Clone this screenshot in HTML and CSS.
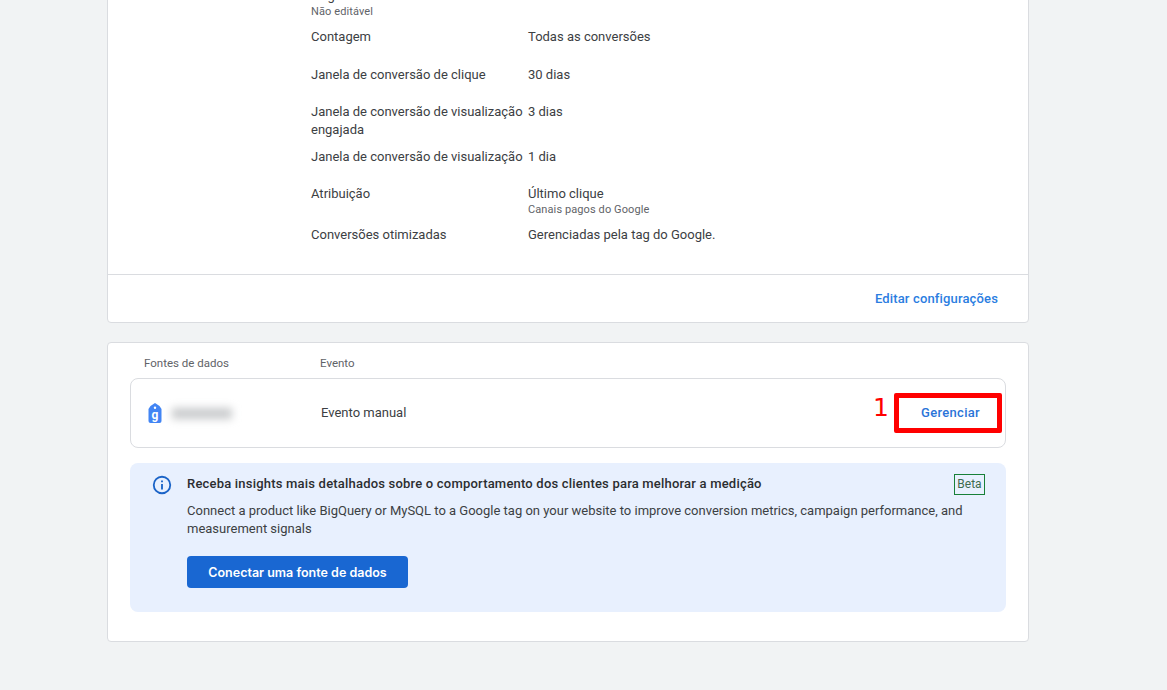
FILE: index.html
```html
<!DOCTYPE html>
<html lang="pt-BR">
<head>
    <meta charset="UTF-8">
    <meta name="viewport" content="width=device-width, initial-scale=1.0">
    <title>Detalhes da conversão</title>
    <link rel="stylesheet" href="styles.css">
</head>
<body>
    <main class="page">
        <section class="card settings">
            <div class="settings-list">
                <div class="setting first">
                    <div class="setting-label">Origem<small>Não editável</small></div>
                    <div></div>
                </div>
                <div class="setting">
                    <div class="setting-label">Contagem</div>
                    <div>Todas as conversões</div>
                </div>
                <div class="setting">
                    <div class="setting-label">Janela de conversão de clique</div>
                    <div>30 dias</div>
                </div>
                <div class="setting">
                    <div class="setting-label">Janela de conversão de visualização engajada</div>
                    <div>3 dias</div>
                </div>
                <div class="setting">
                    <div class="setting-label">Janela de conversão de visualização</div>
                    <div>1 dia</div>
                </div>
                <div class="setting">
                    <div class="setting-label">Atribuição</div>
                    <div>Último clique<small>Canais pagos do Google</small></div>
                </div>
                <div class="setting">
                    <div class="setting-label">Conversões otimizadas</div>
                    <div>Gerenciadas pela tag do Google.</div>
                </div>
            </div>
            <div class="settings-footer">
                <a class="link" href="#">Editar configurações</a>
            </div>
        </section>

        <section class="card sources">
            <div class="sources-head">
                <span class="col-source">Fontes de dados</span>
                <span>Evento</span>
            </div>
            <div class="source-row">
                <div class="source-name">
                    <svg class="tag-icon" viewBox="0 0 14 20" width="14" height="20">
                        <path fill="#4285f4" d="M7 0 11.500 3 13.500 6V18a2 2 0 0 1-2 2H2.500a2 2 0 0 1-2-2V6L2.500 3Z"/>
                        <circle cx="7" cy="4.800" r="1.200" fill="#fff"/>
                        <text x="7" y="15.500" class="tag-letter" text-anchor="middle">g</text>
                    </svg>
                    <span class="blurred"></span>
                </div>
                <div class="source-event">Evento manual</div>
                <a class="manage" href="#">Gerenciar</a>
                <span class="mark-number">1</span>
                <span class="mark-box"></span>
            </div>

            <div class="banner">
                <svg class="info-icon" viewBox="0 0 24 24" width="22" height="22">
                    <path fill="#1a63c7" d="M11 7h2v2h-2zm0 4h2v6h-2zm1-9a10 10 0 1 0 0 20 10 10 0 0 0 0-20zm0 18a8 8 0 1 1 0-16 8 8 0 0 1 0 16z"/>
                </svg>
                <div class="banner-body">
                    <div class="banner-title">
                        <h3>Receba insights mais detalhados sobre o comportamento dos clientes para melhorar a medição</h3>
                        <span class="beta">Beta</span>
                    </div>
                    <p>Connect a product like BigQuery or MySQL to a Google tag on your website to improve conversion metrics, campaign performance, and measurement signals</p>
                    <button type="button" class="primary">Conectar uma fonte de dados</button>
                </div>
            </div>
        </section>
    </main>
</body>
</html>
```

FILE: styles.css
```css
html, body {
    height: 100%;
    overflow: hidden;
}

body {
    margin: 0;
    background-color: #f1f3f4;
    color: #3c4043;
    font-family: Roboto, "Liberation Sans", sans-serif;
    font-size: 13px;
    line-height: 18px;
}

.page {
    width: 922px;
    margin-left: 107px;
}

.card {
    box-sizing: border-box;
    background-color: #fff;
    border: 1px solid #dadce0;
    border-radius: 4px;
}

.settings {
    margin-top: -40px;
    height: 363px;
    display: flex;
    flex-direction: column;
}

.settings-list {
    flex: 1;
    padding: 26px 0 0 203px;
}

.setting {
    display: grid;
    grid-template-columns: 217px 1fr;
    box-sizing: border-box;
    min-height: 37.4px;
    padding-bottom: 9px;
}

.setting.first {
    min-height: 41.2px;
    padding-bottom: 0;
}

.setting-label {
    width: 214px;
}

small {
    display: block;
    font-size: 11px;
    line-height: 14px;
    letter-spacing: 0.1px;
    color: #5f6368;
}

.settings-footer {
    height: 47px;
    border-top: 1px solid #dadce0;
    display: flex;
    align-items: center;
    justify-content: flex-end;
    padding-right: 30px;
}

.link {
    color: #2a7de1;
    font-weight: 500;
    letter-spacing: 0.15px;
    text-decoration: none;
}

.sources {
    margin-top: 19px;
    height: 300px;
    padding: 0 22px;
}

.sources-head {
    display: flex;
    height: 35px;
    align-items: center;
    padding: 5px 0 0 14px;
    box-sizing: border-box;
    font-size: 11.5px;
    color: #5f6368;
}

.col-source {
    width: 176px;
}

.source-row {
    position: relative;
    box-sizing: border-box;
    height: 70px;
    display: flex;
    align-items: center;
    border: 1px solid #dadce0;
    border-radius: 8px;
    padding-left: 17px;
}

.source-name {
    width: 173px;
    display: flex;
    align-items: center;
    gap: 10px;
}

.tag-icon {
    flex: none;
}

.tag-letter {
    fill: #fff;
    font-family: Roboto, sans-serif;
    font-size: 12px;
    font-weight: 700;
}

.blurred {
    width: 60px;
    height: 11px;
    background-color: #c8cacc;
    filter: blur(4px);
}

.source-event {
    flex: 1;
}

.manage {
    color: #2a74d8;
    font-weight: 500;
    letter-spacing: 0.3px;
    text-decoration: none;
    margin-right: 25px;
}

.mark-number {
    position: absolute;
    left: 742px;
    top: 16px;
    color: #ff0000;
    font-family: "DejaVu Sans", sans-serif;
    font-size: 25px;
    line-height: 26px;
}

.mark-box {
    position: absolute;
    left: 763px;
    top: 14px;
    width: 108px;
    height: 40px;
    box-sizing: border-box;
    border: 5px solid #ff0000;
    border-radius: 2px;
}

.banner {
    box-sizing: border-box;
    height: 149px;
    margin-top: 15px;
    display: flex;
    padding: 12px 21px 0 21px;
    background-color: #e8f0fe;
    border-radius: 8px;
}

.info-icon {
    flex: none;
    margin-top: -1px;
}

.banner-body {
    flex: 1;
    margin-left: 14px;
}

.banner-title {
    display: flex;
    justify-content: space-between;
    align-items: flex-start;
}

h3 {
    margin: 0;
    font-size: 13px;
    font-weight: 500;
    letter-spacing: 0.2px;
    line-height: 18px;
    color: #2b2d30;
}

.beta {
    box-sizing: border-box;
    width: 31px;
    height: 21px;
    margin-top: -1px;
    text-align: center;
    font-size: 12px;
    line-height: 18px;
    border: 1px solid #188038;
    color: #3d6b4f;
}

p {
    margin: 7px 0 18px;
}

.primary {
    display: block;
    width: 221px;
    height: 32px;
    border: none;
    border-radius: 4px;
    background-color: #1967d2;
    color: #fff;
    font-family: Inter, Roboto, sans-serif;
    font-size: 12.5px;
    font-weight: 600;
}
```
